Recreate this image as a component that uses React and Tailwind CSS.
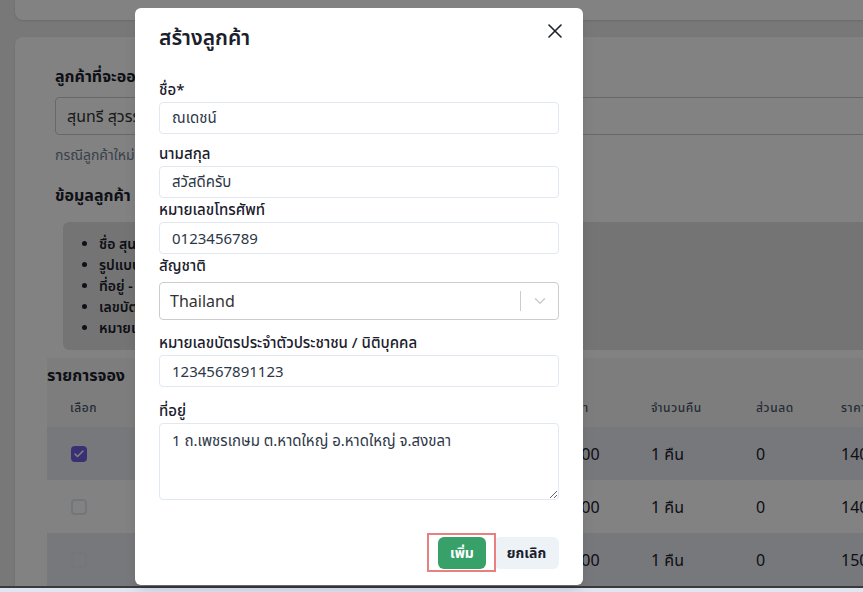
import { X, ChevronDown, Check } from 'lucide-react';

const font = { fontFamily: '"Noto Sans", "Noto Sans Thai", "Noto Sans Thai Looped", Tahoma, sans-serif' };

function Field({ label, value, className = '' }) {
  return (
    <div className={className}>
      <div className="mb-[2px] text-[15px] font-medium leading-[22px] text-[#1a202c]">{label}</div>
      <input
        readOnly
        value={value}
        className="h-8 w-full rounded-sm border border-[#e2e8f0] px-3 text-[15px] text-[#2d3748] outline-none"
      />
    </div>
  );
}

function CheckBox({ checked }) {
  if (checked) {
    return (
      <span className="flex h-4 w-4 items-center justify-center rounded-sm bg-[#6f5fe0]">
        <Check size={12} strokeWidth={3} className="text-white" />
      </span>
    );
  }
  return <span className="block h-4 w-4 rounded-sm border-2 border-[#e2e8f0]" />;
}

const rows = [
  { checked: true, room: '101', date: '01/01/2567', price: '1400', total: '1400', striped: true },
  { checked: false, room: '102', date: '01/01/2567', price: '1400', total: '1400', striped: false },
  { checked: false, room: '103', date: '01/01/2567', price: '1500', total: '1500', striped: true },
];

function BackgroundPage() {
  return (
    <div className="h-[586px] overflow-hidden bg-[#ececec] px-[15px]">
      <div className="h-[20px] w-[1000px] rounded-b-lg bg-white shadow" />

      <div className="mt-[17px] h-[600px] w-[1000px] rounded-lg bg-white pl-[32px] pt-[27px] shadow">
        <div className="pl-[8px]">
          <h3 className="text-base font-bold leading-6 text-[#1a202c]">ลูกค้าที่จะออกใบเสร็จ</h3>
          <div className="mt-[9px] flex h-[38px] items-center rounded border border-[#cccccc] pl-[11px] text-base text-[#333]">
            สุนทรี สุวรรณ
          </div>
          <p className="mt-[10px] text-sm leading-5 text-[#718096]">กรณีลูกค้าใหม่ กรุณากดปุ่มสร้างลูกค้า</p>
          <h3 className="mt-[18px] text-base font-bold leading-6 text-[#1a202c]">ข้อมูลลูกค้า</h3>
          <div className="ml-[8px] mt-[15px] h-[128px] rounded-md bg-[#e4e4e4] py-[11px]">
            <ul className="list-disc pl-[36px] text-sm font-semibold leading-[21px] text-[#1a202c]">
              <li>ชื่อ สุนทรี สุวรรณ</li>
              <li>รูปแบบลูกค้า - บุคคล</li>
              <li>ที่อยู่ - </li>
              <li>เลขบัตรประชาชน - </li>
              <li>หมายเลขโทรศัพท์ - </li>
            </ul>
          </div>
        </div>

        <div className="mt-[8px] bg-[#f6f6f7] pt-[5px]">
          <h3 className="text-base font-bold leading-6 text-[#1a202c]">รายการจอง</h3>
          <div className="mt-[2px] flex h-[38px] items-center text-xs font-medium tracking-wider text-[#4a5568]">
            <div className="w-[150px] shrink-0 pl-[23px]">เลือก</div>
            <div className="w-[153px] shrink-0">ห้อง</div>
            <div className="w-[213px] shrink-0">วันที่เข้าพัก</div>
            <div className="w-[88px] shrink-0">ราคา</div>
            <div className="w-[105px] shrink-0">จำนวนคืน</div>
            <div className="w-[85px] shrink-0">ส่วนลด</div>
            <div className="w-[120px] shrink-0">ราคารวม</div>
          </div>
          {rows.map((r) => (
            <div
              key={r.room}
              className={`flex h-[53px] items-center text-base text-[#1a202c] ${r.striped ? 'bg-[#e9ebf2]' : 'bg-white'}`}
            >
              <div className="w-[150px] shrink-0 pl-[24px]">
                <CheckBox checked={r.checked} />
              </div>
              <div className="w-[153px] shrink-0">{r.room}</div>
              <div className="w-[213px] shrink-0">{r.date}</div>
              <div className="w-[88px] shrink-0">{r.price}</div>
              <div className="w-[105px] shrink-0">1 คืน</div>
              <div className="w-[85px] shrink-0">0</div>
              <div className="w-[120px] shrink-0">{r.total}</div>
            </div>
          ))}
        </div>
      </div>
    </div>
  );
}

export default function App() {
  return (
    <div className="relative h-[592px] w-[863px] overflow-hidden bg-[#dfe6f2]" style={font}>
      <BackgroundPage />
      <div className="h-[2px] bg-[#3a3a3a]" />

      {/* dim overlay */}
      <div className="absolute inset-x-0 top-0 h-[586px] bg-black/[0.49]" />

      {/* create customer modal */}
      <div className="absolute left-[135px] top-[8px] flex h-[577px] w-[448px] flex-col rounded-md bg-white shadow-lg">
        <div className="flex items-center justify-between px-6 pb-4 pt-[14px]">
          <h2 className="text-[21px] font-semibold leading-[30px] text-[#1a202c]">สร้างลูกค้า</h2>
          <button className="-mr-[12px] -mt-[13px] flex h-8 w-8 items-center justify-center text-[#1a202c]">
            <X size={24} strokeWidth={1.6} />
          </button>
        </div>

        <div className="flex-1 px-6 pt-[10px]">
          <Field label="ชื่อ*" value="ณเดชน์" />
          <Field label="นามสกุล" value="สวัสดีครับ" className="mt-2" />
          <Field label="หมายเลขโทรศัพท์" value="0123456789" />

          <div className="mb-[6px] text-[15px] font-medium leading-[22px] text-[#1a202c]">สัญชาติ</div>
          <div className="flex h-[38px] items-center rounded border border-[#cccccc]">
            <span className="flex-1 pl-[10px] text-base text-[#333]">Thailand</span>
            <span className="h-5 w-px bg-[#cccccc]" />
            <span className="flex w-[37px] justify-center text-[#cccccc]">
              <ChevronDown size={18} strokeWidth={2} />
            </span>
          </div>

          <Field label="หมายเลขบัตรประจำตัวประชาชน / นิติบุคคล" value="1234567891123" className="mt-[11px]" />

          <div className="mb-[2px] mt-3 text-[15px] font-medium leading-[22px] text-[#1a202c]">ที่อยู่</div>
          <textarea
            readOnly
            defaultValue="1 ถ.เพชรเกษม ต.หาดใหญ่ อ.หาดใหญ่ จ.สงขลา"
            className="block h-[77px] w-full rounded-sm border border-[#e2e8f0] px-3 py-[5px] text-[15px] text-[#2d3748] outline-none"
          />
        </div>

        <div className="relative flex justify-end gap-2 px-6 py-4">
          <button className="h-8 w-[48px] rounded-md bg-[#38a169] text-sm font-bold text-white">เพิ่ม</button>
          <button className="h-8 w-[65px] rounded-md bg-[#edf2f7] text-sm font-bold text-[#1a202c]">ยกเลิก</button>
          {/* annotation box around the add button */}
          <div className="absolute left-[292px] top-[12px] h-[39px] w-[69px] border-2 border-[#e88080]" />
        </div>
      </div>
    </div>
  );
}
